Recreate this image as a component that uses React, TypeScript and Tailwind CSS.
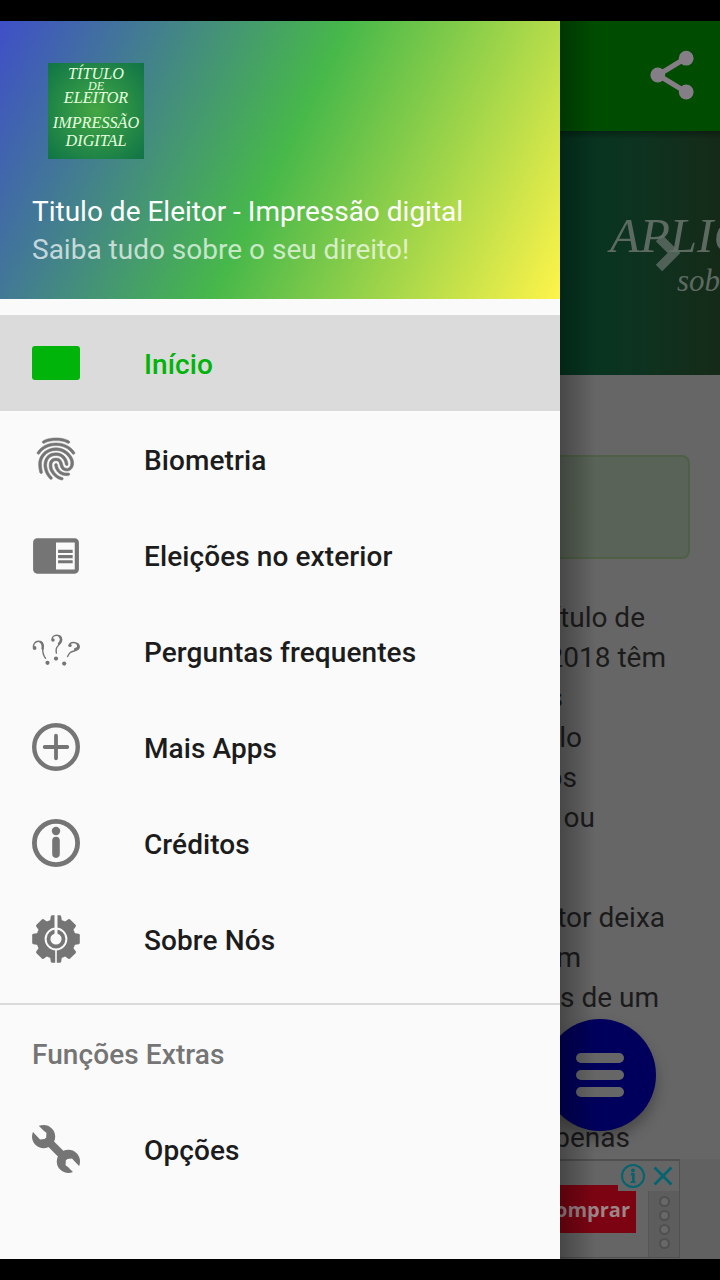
import type { ReactNode } from "react";
import { IoMdFingerPrint } from "react-icons/io";
import { MdChromeReaderMode } from "react-icons/md";

const GEAR_TEETH = [0, 45, 90, 135, 180, 225, 270, 315];

function HomeIcon() {
  return (
    <svg viewBox="0 0 48 48" className="size-12" aria-hidden>
      <rect x="0" y="7" width="48" height="34" rx="3" fill="#00b40a" />
    </svg>
  );
}

function QuestionsIcon() {
  return (
    <svg viewBox="0 -3.6 48 48" className="size-12" fill="none" stroke="#757575" strokeLinecap="round" aria-hidden>
      <path d="M1.8 17.5C.6 14 3 10.6 6.6 10.6c3 0 4.8 2.4 4.3 6.2-.5 4.4 0 7.6 2.6 10.8" strokeWidth="1.4" />
      <path d="M8.6 11.4c2 1.2 2.5 3.4 2 6.6" strokeWidth="2.4" />
      <path d="M20.3 9.6C19.6 6.6 21.6 4.7 24.7 4.7c3.2 0 5 2 4.8 4.8-.2 3.6-4.5 5.4-5.2 8.6-.3 1.5-.2 3 .1 4.4" strokeWidth="1.4" />
      <path d="M27.6 5.8c2.2 2 1.8 4.6-.6 7.4" strokeWidth="2.4" />
      <path d="M37.4 14.6c.6-2 3-3 5.8-2.4 3 .8 4.7 3.2 3.7 5.4-1.3 3-6.2 2.4-8.6 4.3-1.3 1-2 2.4-2.7 4" strokeWidth="1.4" />
      <path d="M45.6 13.6c1.4 2.2.6 4-2.4 5" strokeWidth="2.4" />
      <g fill="#757575" stroke="none">
        <circle cx="2.6" cy="17.4" r="1.9" />
        <circle cx="21" cy="9.4" r="1.7" />
        <circle cx="38" cy="14.8" r="1.7" />
        <circle cx="15.5" cy="32.2" r="2.1" />
        <circle cx="24" cy="28" r="2.1" />
        <circle cx="32.2" cy="33" r="2.1" />
      </g>
    </svg>
  );
}

function PlusCircleIcon() {
  return (
    <svg viewBox="0 0 48 48" className="size-12" fill="none" stroke="#757575" aria-hidden>
      <circle cx="24" cy="24" r="21.8" strokeWidth="4.4" />
      <path d="M24 12.7v22.6M12.7 24h22.6" strokeWidth="3.8" strokeLinecap="round" />
    </svg>
  );
}

function InfoCircleIcon() {
  return (
    <svg viewBox="0 0 48 48" className="size-12" fill="none" stroke="#757575" aria-hidden>
      <circle cx="24" cy="24" r="21.6" strokeWidth="4.8" />
      <circle cx="24" cy="12" r="4.2" fill="#757575" stroke="none" />
      <path d="M24 21.5v13.6" strokeWidth="7.6" strokeLinecap="round" />
    </svg>
  );
}

function GearIcon() {
  return (
    <svg viewBox="0 0 48 48" className="size-12" aria-hidden>
      <circle cx="24" cy="24" r="19.8" fill="#757575" />
      {GEAR_TEETH.map((angle) => (
        <path
          key={angle}
          d="M18 6.4 18.8 1.4Q19 .2 20.2.2h7.6q1.2 0 1.4 1.2l.8 5z"
          fill="#757575"
          transform={`rotate(${angle} 24 24)`}
        />
      ))}
      <circle cx="24" cy="24" r="10.4" fill="none" stroke="#fafafa" strokeWidth="2" />
      <circle cx="24" cy="24" r="5.6" fill="#fafafa" />
      <path d="M24 0v24" stroke="#fafafa" strokeWidth="3" />
      <path d="M24 34v14" stroke="#fafafa" strokeWidth="1.6" />
    </svg>
  );
}

function WrenchIcon() {
  return (
    <svg viewBox="0 0 48 48" className="size-12" aria-hidden>
      <path d="M14 14 34 34" stroke="#757575" strokeWidth="8" />
      <circle cx="11.6" cy="11.6" r="11.6" fill="#757575" />
      <circle cx="36.4" cy="36.4" r="11.6" fill="#757575" />
      <path d="M-3 3 6.2 12.4 8 14.4l4.6-.4 1.6-1.6.2-4.6-2.4-1.8L3-3zM51 45l-9.2-9.4L40 33.6l-4.6.4-1.6 1.6-.2 4.6 2.4 1.8L45 51z" fill="#fafafa" />
    </svg>
  );
}

type MenuItem = { label: string; icon: ReactNode; active?: boolean };

const MENU: MenuItem[] = [
  { label: "Início", icon: <HomeIcon />, active: true },
  {
    label: "Biometria",
    icon: <IoMdFingerPrint className="size-12 scale-x-105 stroke-[#757575] stroke-[6] text-[#757575]" />,
  },
  { label: "Eleições no exterior", icon: <MdChromeReaderMode className="size-[50px] shrink-0 text-[#757575]" /> },
  { label: "Perguntas frequentes", icon: <QuestionsIcon /> },
  { label: "Mais Apps", icon: <PlusCircleIcon /> },
  { label: "Créditos", icon: <InfoCircleIcon /> },
  { label: "Sobre Nós", icon: <GearIcon /> },
];

const EXTRAS: MenuItem[] = [{ label: "Opções", icon: <WrenchIcon /> }];

function MenuRow({ label, icon, active }: MenuItem) {
  return (
    <li className={`flex h-24 items-center gap-16 px-8 ${active ? "bg-[#dbdbdb] text-[#00b40a]" : "text-[#1c1c1c]"}`}>
      <span className="flex size-12 shrink-0 items-center justify-center">{icon}</span>
      <span className="pt-1 text-[28px] font-medium tracking-[0.09px]">{label}</span>
    </li>
  );
}

function DrawerHeader() {
  return (
    <header className="flex h-[278px] flex-col bg-[linear-gradient(116.4deg,#3f4fc8_0%,#47b84a_50%,#fff44a_100%)] px-8 pt-[42px]">
      <div className="ml-4 flex size-24 flex-col items-center bg-[radial-gradient(circle,#45a643_0%,#2b9146_45%,#0f7346_100%)] pt-[3px] font-['Liberation_Serif',serif] text-[16.2px] leading-4 text-[#e6ffdf] italic">
        <span>TÍTULO</span>
        <span className="text-[12px] leading-[8px]">DE</span>
        <span>ELEITOR</span>
        <span className="mt-[9px]">IMPRESSÃO</span>
        <span className="mt-0.5">DIGITAL</span>
      </div>
      <p className="mt-[34px] text-[28px] leading-[38px] text-white">Titulo de Eleitor - Impressão digital</p>
      <p className="text-[28px] leading-[38px] text-white/70">Saiba tudo sobre o seu direito!</p>
    </header>
  );
}

function Drawer() {
  return (
    <nav className="flex w-[560px] shrink-0 flex-col bg-[#fafafa]">
      <DrawerHeader />
      <ul className="mt-4">
        {MENU.map((item) => (
          <MenuRow key={item.label} {...item} />
        ))}
      </ul>
      <div className="mt-4 h-0.5 bg-[#dadada]" />
      <h2 className="flex h-24 items-center px-8 pt-[3px] text-[28px] font-medium tracking-[0.09px] text-[#757575]">
        Funções Extras
      </h2>
      <ul>
        {EXTRAS.map((item) => (
          <MenuRow key={item.label} {...item} />
        ))}
      </ul>
    </nav>
  );
}

function Toolbar() {
  return (
    <div className="flex h-[110px] items-center justify-end bg-[#004d02] pr-6 pb-0.5">
      <svg viewBox="0 0 48 52" className="h-[52px] w-12" fill="#867e86" aria-hidden>
        <path d="M38 9 10 26l28 17" fill="none" stroke="#867e86" strokeWidth="5" />
        <circle cx="38.2" cy="9.2" r="7.4" />
        <circle cx="9.8" cy="26" r="7.4" />
        <circle cx="38.2" cy="43" r="7.4" />
      </svg>
    </div>
  );
}

function Banner() {
  return (
    <div className="relative h-[244px] overflow-hidden bg-linear-to-r from-[#04351f] via-[#0d3320] to-[#152a18] pl-[50px] font-['Liberation_Serif',serif] whitespace-nowrap text-[#5c6a61] italic">
      <div className="absolute inset-x-0 top-0 h-2 bg-linear-to-b from-black/30 to-transparent" />
      <p className="pt-[78px] text-[49px] leading-[54px]">APLIC</p>
      <p className="pl-[67px] text-[31px] leading-9">sobre</p>
      <svg viewBox="0 0 30 40" className="absolute top-[102px] left-[94px] h-10 w-[30px]" aria-hidden>
        <path d="M5 5 20 20 5 35" fill="none" stroke="#66736b" strokeOpacity="0.75" strokeWidth="9" />
      </svg>
    </div>
  );
}

function Line({ text, end }: { text: string; end: number }) {
  return (
    <p className="flex justify-end overflow-hidden whitespace-nowrap" style={{ paddingRight: 720 - end }}>
      {text}
    </p>
  );
}

function Article() {
  return (
    <div className="mt-[39px] text-[28px] leading-10 text-[#1b1b1b]">
      <Line text="Título de" end={645} />
      <Line text="2018 têm" end={666} />
      <Line text="s" end={563} />
      <Line text="lo" end={582} />
      <Line text="os" end={577} />
      <Line text="ou" end={595} />
      <div className="mt-[60px]">
        <Line text="eleitor deixa" end={665} />
        <Line text="em" end={581} />
        <Line text="s de um" end={659} />
      </div>
      <div className="mt-[100px]">
        <Line text="apenas" end={630} />
      </div>
    </div>
  );
}

function AdBanner() {
  return (
    <div className="absolute bottom-0 left-0 flex h-[100px] w-full bg-[#616161]">
      <div className="relative flex h-[99px] w-[120px] border-y border-r border-t-2 border-[#505050] bg-[#656565]">
        <div className="mt-6 flex h-12 w-[76px] items-center justify-end bg-[#7c0412] pr-1.5 pt-0.5 font-['Open_Sans',sans-serif] text-[20px] font-bold whitespace-nowrap text-[#9d8588]">
          Comprar
        </div>
        <div className="ml-3 flex w-[31px] flex-col items-center gap-[3px] border-l border-[#565656] bg-[#5d5d5d] pt-[35px]">
          <span className="size-[11px] rounded-full border-2 border-[#505050] bg-[#686868]" />
          <span className="size-[11px] rounded-full border-2 border-[#505050] bg-[#686868]" />
          <span className="size-[11px] rounded-full border-2 border-[#505050] bg-[#686868]" />
          <span className="size-[11px] rounded-full border-2 border-[#505050] bg-[#686868]" />
        </div>
        <div className="absolute top-0 right-0 flex h-[30px] w-[61px] items-center justify-between bg-[#656565] pr-1 pl-[3px]">
          <svg viewBox="0 0 24 24" className="size-6" fill="none" stroke="#04646f" aria-hidden>
            <circle cx="12" cy="12" r="11" strokeWidth="2" />
            <path d="M10 10.2h2.4v8" strokeWidth="2.6" />
            <path d="M9.4 18.2h5.2" strokeWidth="1.8" />
            <circle cx="12" cy="6.4" r="1.9" fill="#04646f" stroke="none" />
          </svg>
          <svg viewBox="0 0 24 24" className="size-6" aria-hidden>
            <path d="M3.6 3.6 20.4 20.4M20.4 3.6 3.6 20.4" stroke="#04646f" strokeWidth="2.8" />
          </svg>
        </div>
      </div>
    </div>
  );
}

function MenuFab() {
  return (
    <button className="absolute top-[998px] -left-4 flex size-28 flex-col items-center justify-center gap-[7px] rounded-full bg-[#00005c] shadow-[0_8px_14px_rgba(0,0,0,0.3)]">
      <span className="h-2.5 w-12 rounded-full bg-[#666666]" />
      <span className="h-2.5 w-12 rounded-full bg-[#666666]" />
      <span className="h-2.5 w-12 rounded-full bg-[#666666]" />
    </button>
  );
}

function Page() {
  return (
    <main className="relative min-w-0 flex-1 overflow-hidden bg-[#666666]">
      <Toolbar />
      <Banner />
      <div className="mt-20 mr-[30px] h-[104px] rounded-r-lg border-2 border-l-0 border-[#506047] bg-[#596357]" />
      <Article />
      <AdBanner />
      <MenuFab />
      <div className="absolute inset-y-0 left-0 w-9 bg-linear-to-r from-black/30 to-transparent" />
    </main>
  );
}

export default function App() {
  return (
    <div className="flex h-[1280px] w-[720px] overflow-hidden bg-black pt-[21px] pb-[21px] font-[Roboto,sans-serif]">
      <Drawer />
      <Page />
    </div>
  );
}
